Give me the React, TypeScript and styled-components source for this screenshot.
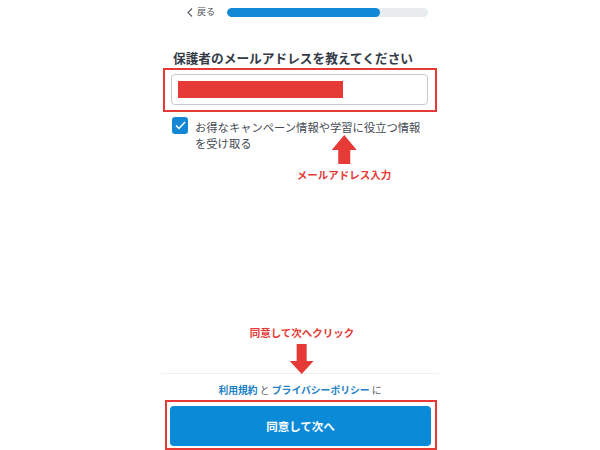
import React from "react";
import styled, { createGlobalStyle } from "styled-components";

const GlobalStyle = createGlobalStyle`
  html, body { margin: 0; padding: 0; background: #ffffff; }
  body { font-family: "Noto Sans CJK JP", "Noto Sans", "Liberation Sans", sans-serif; }
  * { box-sizing: border-box; }
`;

const RED = "#e53a35";
const BLUE = "#0b8bd7";

const Page = styled.div`
  position: relative;
  width: 278px;
  height: 450px;
  margin: 0 auto;
  display: flex;
  flex-direction: column;
  overflow: hidden;
`;

const Header = styled.header`
  height: 24px;
  display: flex;
  align-items: center;
  gap: 12px;
  padding: 0 11px 0 26px;
`;

const Back = styled.a`
  display: flex;
  align-items: center;
  gap: 4px;
  font-size: 9px;
  line-height: 12px;
  color: #4a4f59;
  text-decoration: none;
`;

const Track = styled.div`
  flex: 1;
  height: 9px;
  border-radius: 5px;
  background: #e8ecef;
  overflow: hidden;
`;

const Fill = styled.div`
  height: 100%;
  border-radius: 5px;
  background: #1189d6;
`;

const Body = styled.main`
  padding: 0 11px;
  display: flex;
  flex-direction: column;
`;

const Title = styled.h1`
  margin: 24px 0 0;
  padding-left: 1px;
  font-size: 12.7px;
  line-height: 20px;
  font-weight: 700;
  color: #353b46;
  white-space: nowrap;
`;

const Highlight = styled.div<{ $ml: number; $mr: number; $pad: string }>`
  border: 2px solid ${RED};
  margin: 0 ${(p) => p.$mr}px 0 ${(p) => p.$ml}px;
  padding: ${(p) => p.$pad};
`;

const InputBox = styled.div`
  height: 31px;
  border: 1px solid #c6cad0;
  border-radius: 4px;
  background: #fff;
  display: flex;
  align-items: center;
  padding-left: 6px;
`;

const Redacted = styled.div`
  width: 165px;
  height: 17px;
  background: ${RED};
`;

const CheckRow = styled.label`
  display: flex;
  align-items: flex-start;
  gap: 7px;
  margin-top: 5px;
`;

const CheckBox = styled.span`
  flex: none;
  width: 16px;
  height: 17px;
  border-radius: 3px;
  background: #1687d4;
  display: flex;
  align-items: center;
  justify-content: center;
`;

const CheckText = styled.span`
  font-size: 11.3px;
  line-height: 16px;
  color: #454a54;
  margin-top: 2px;
  white-space: nowrap;
`;

const Footer = styled.footer`
  margin-top: auto;
  border-top: 1px solid #eef0f2;
  padding-top: 9px;
  display: flex;
  flex-direction: column;
`;

const Terms = styled.p`
  margin: 0 0 3px;
  text-align: center;
  font-size: 9.8px;
  line-height: 14px;
  color: #5a5f68;
`;

const TermLink = styled.a`
  color: #1a7fc4;
  font-weight: 700;
  text-decoration: none;
`;

const Button = styled.button`
  width: 100%;
  height: 40px;
  border: none;
  border-radius: 4px;
  background: ${BLUE};
  color: #fff;
  font-family: inherit;
  font-size: 11.5px;
  font-weight: 700;
  display: flex;
  align-items: center;
  justify-content: center;
`;

const Callout = styled.div<{ $x: number; $y: number }>`
  position: absolute;
  left: ${(p) => p.$x}px;
  top: ${(p) => p.$y}px;
  transform: translateX(-50%);
  display: flex;
  flex-direction: column;
  align-items: center;
  gap: 4px;
  pointer-events: none;
`;

const CalloutLabel = styled.span`
  font-size: 10.5px;
  line-height: 14px;
  font-weight: 700;
  color: ${RED};
  white-space: nowrap;
`;

const UpArrow = () => (
  <svg width="25" height="29" viewBox="0 0 25 29">
    <polygon points="12.5,0 25,15 18.5,15 18.5,29 6.5,29 6.5,15 0,15" fill={RED} />
  </svg>
);

const DownArrow = () => (
  <svg width="24" height="30" viewBox="0 0 24 30">
    <polygon points="7,0 17,0 17,17 24,17 12,30 0,17 7,17" fill={RED} />
  </svg>
);

export default function App() {
  return (
    <>
      <GlobalStyle />
      <Page>
        <Header>
          <Back href="#">
            <svg width="6" height="9" viewBox="0 0 6 9">
              <polyline points="5,0.5 1,4.5 5,8.5" fill="none" stroke="#555a63" strokeWidth="1.1" />
            </svg>
            戻る
          </Back>
          <Track>
            <Fill style={{ width: "76%" }} />
          </Track>
        </Header>
        <Body>
          <Title>保護者のメールアドレスを教えてください</Title>
          <Highlight $ml={-9} $mr={-9} $pad="4px 7px 5px 6px">
            <InputBox>
              <Redacted />
            </InputBox>
          </Highlight>
          <CheckRow>
            <CheckBox>
              <svg width="11" height="9" viewBox="0 0 11 9">
                <polyline points="1,4.5 4,7.5 10,1" fill="none" stroke="#fff" strokeWidth="1.5" />
              </svg>
            </CheckBox>
            <CheckText>
              お得なキャンペーン情報や学習に役立つ情報
              <br />
              を受け取る
            </CheckText>
          </CheckRow>
        </Body>
        <Footer>
          <Terms>
            <TermLink href="#">利用規約</TermLink> と <TermLink href="#">プライバシーポリシー</TermLink> に
          </Terms>
          <Highlight $ml={4} $mr={2} $pad="4px 4px 2px 3px">
            <Button>同意して次へ</Button>
          </Highlight>
        </Footer>
        <Callout $x={183} $y={135}>
          <UpArrow />
          <CalloutLabel>メールアドレス入力</CalloutLabel>
        </Callout>
        <Callout $x={141} $y={326}>
          <CalloutLabel>同意して次へクリック</CalloutLabel>
          <DownArrow />
        </Callout>
      </Page>
    </>
  );
}
